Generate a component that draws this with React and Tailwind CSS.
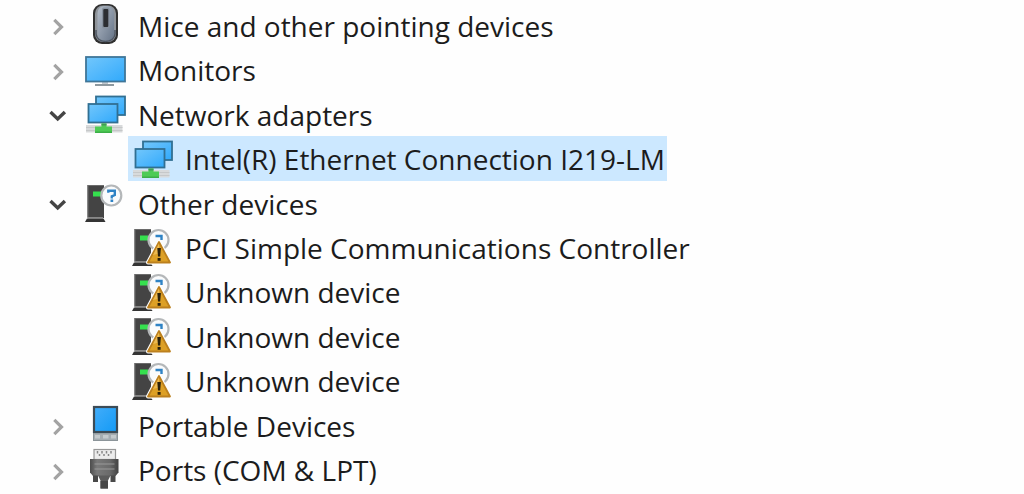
import React, { useState } from "react";

function MouseIcon() {
  return (
    <svg viewBox="0 0 44 44" className="size-11" aria-hidden="true">
      <defs>
        <linearGradient id="mouse-body" x1="0" y1="0" x2="1" y2="1">
          <stop offset="0" stopColor="#b4bdc9" />
          <stop offset="1" stopColor="#667487" />
        </linearGradient>
      </defs>
      <rect x="9" y="1" width="25" height="40" rx="9" fill="#303030" />
      <rect x="11" y="2.5" width="21" height="36.5" rx="8" fill="#8f949a" />
      <rect x="13.5" y="3" width="16.5" height="35" rx="7" fill="url(#mouse-body)" />
      <path d="M12 27v4q1 7 9.500 7.500q8.500-.5 9.500-7.500v-4" fill="none" stroke="#4d5663" strokeWidth="1.5" />
      <rect x="18" y="4.5" width="7.5" height="21" rx="2" fill="#87919e" />
      <rect x="19.300" y="6" width="5" height="18" rx="1" fill="#2c2e32" />
    </svg>
  );
}

function ScreenFill({ id }) {
  return (
    <linearGradient id={id} x1="0" y1="0" x2="1" y2="1">
      <stop offset="0" stopColor="#73c7fb" />
      <stop offset="0.5" stopColor="#52b8fc" />
      <stop offset="1" stopColor="#30a9fb" />
    </linearGradient>
  );
}

function MonitorIcon() {
  return (
    <svg viewBox="0 0 44 44" className="size-11" aria-hidden="true">
      <defs>
        <ScreenFill id="monitor-screen" />
      </defs>
      <rect x="18" y="34" width="6" height="3" fill="#c3c9ce" />
      <rect x="11" y="36" width="19" height="2" fill="#8e999f" />
      <rect x="2" y="9" width="39" height="24.5" fill="url(#monitor-screen)" stroke="#3f7698" strokeWidth="1.800" />
    </svg>
  );
}

function NetworkIcon({ id }) {
  return (
    <svg viewBox="0 0 44 44" className="size-11" aria-hidden="true">
      <defs>
        <ScreenFill id={id} />
      </defs>
      <rect x="2" y="33" width="36.5" height="7.5" fill="#d8dadb" />
      <path d="M2 35.500h36.500M2 38.500h36.500" stroke="#c6c8c9" strokeWidth="1" />
      <rect x="12" y="4.5" width="29" height="18.5" fill={`url(#${id})`} stroke="#316f92" strokeWidth="1.800" />
      <rect x="4.500" y="12" width="29" height="18.500" fill={`url(#${id})`} stroke="#316f92" strokeWidth="1.800" />
      <path d="M17.500 31.500h5v3h5.500v6.500h-17v-6.500h6.500z" fill="#4ecb55" />
      <path d="M17.500 31.500h5v2h-5z" fill="#429d56" />
      <path d="M11 39.500h17v1.500h-17z" fill="#3cae47" />
    </svg>
  );
}

function Tower() {
  return (
    <>
      <rect x="3.500" y="4" width="16.500" height="33" fill="#444" />
      <path d="M3.500 4h16.500v1h-15.500v31h-1z" fill="#6b6b6b" />
      <rect x="4" y="36" width="15" height="1.500" fill="#888" />
      <path d="M3 37.500h16.500l2 3.500h-20.500z" fill="#343434" />
      <rect x="9" y="10.500" width="8" height="5" fill="#35e04e" />
    </>
  );
}

function OtherIcon() {
  return (
    <svg viewBox="0 0 44 44" className="size-11" aria-hidden="true">
      <Tower />
      <circle cx="27.300" cy="14.500" r="10" fill="#fafbfc" stroke="#b4b7b9" strokeWidth="2.200" />
      <path d="M24.300 11.800v-2h6.500v4.200l-3 1.300v2.200" fill="none" stroke="#2f83c5" strokeWidth="2.400" />
      <rect x="26.500" y="18.500" width="2.700" height="2.500" fill="#2f83c5" />
    </svg>
  );
}

function WarningIcon() {
  return (
    <svg viewBox="0 0 44 44" className="size-11" aria-hidden="true">
      <Tower />
      <circle cx="27.500" cy="15" r="10" fill="#fafbfc" stroke="#b4b7b9" strokeWidth="2.200" />
      <path d="M24.500 11h6v4" fill="none" stroke="#2f83c5" strokeWidth="2.400" />
      <path d="M28 17L39 37.500H17z" fill="#fefefe" stroke="#fefefe" strokeWidth="4" strokeLinejoin="round" />
      <path d="M28 17L39 37.500H17z" fill="#dda026" stroke="#bc801e" strokeWidth="1.800" strokeLinejoin="round" />
      <path d="M28 18.500L22 30l6-1.500z" fill="#edba51" />
      <path d="M26.300 23h3.600l-.7 8.500h-2.200z" fill="#2b210c" />
      <rect x="26.600" y="33" width="3" height="2.800" fill="#2b210c" />
    </svg>
  );
}

function PortableIcon() {
  return (
    <svg viewBox="0 0 44 44" className="size-11" aria-hidden="true">
      <defs>
        <linearGradient id="portable-screen" x1="0" y1="0" x2="1" y2="1">
          <stop offset="0" stopColor="#43adfa" />
          <stop offset="1" stopColor="#129af6" />
        </linearGradient>
      </defs>
      <rect x="9" y="3" width="25" height="35" fill="#8b9499" />
      <rect x="10" y="4" width="23" height="25" fill="url(#portable-screen)" stroke="#3c4b56" strokeWidth="2.200" />
      <rect x="10" y="30.500" width="23" height="6.500" fill="#a5adb2" />
      <path d="M11 32h5v3.500h-5zM19 32h5.500v3.500h-5.500zM27 32h5v3.500h-5z" fill="#c4cacd" />
    </svg>
  );
}

function PortsIcon() {
  return (
    <svg viewBox="0 0 44 44" className="size-11" aria-hidden="true">
      <defs>
        <linearGradient id="port-shell" x1="0" y1="0" x2="1" y2="0">
          <stop offset="0" stopColor="#4c4c4c" />
          <stop offset="0.25" stopColor="#797979" />
          <stop offset="0.7" stopColor="#6a6a6a" />
          <stop offset="1" stopColor="#424242" />
        </linearGradient>
      </defs>
      <rect x="10" y="1.500" width="21.500" height="10" fill="#ececec" stroke="#989898" strokeWidth="1.200" />
      <path d="M13.500 3v2.500M18 3v2.500M22.500 3v2.500M27 3v2.500M15.500 6v2M20 6v2M24.500 6v2" stroke="#888" strokeWidth="1.500" />
      <path d="M6 11h28.500v13.500l-3 3.500h-22.500l-3-3.500z" fill="url(#port-shell)" />
      <path d="M10.500 16h20M10.500 21h20" stroke="#999" strokeWidth="1.200" />
      <path d="M9 27.500h5v6.500h-5zM26.500 27.500h5v6.500h-5z" fill="#494949" />
      <path d="M14 27.500h12.500l-2.500 5v8h-7.500v-8z" fill="#5c5c5c" />
      <path d="M16.500 33h7.500v7.500h-7.500z" fill="#474747" />
    </svg>
  );
}

function Chevron({ open }) {
  return (
    <svg viewBox="0 0 20 20" className="mt-1 size-5" aria-hidden="true">
      {open ? (
        <path d="M2.500 6l7.200 7 7.200-7" fill="none" stroke="#444" strokeWidth="3.400" />
      ) : (
        <path d="M6.300 2.800l7.200 7.200-7.200 7.200" fill="none" stroke="#a3a3a3" strokeWidth="3.200" />
      )}
    </svg>
  );
}

const categories = [
  { name: "Mice and other pointing devices", icon: <MouseIcon /> },
  { name: "Monitors", icon: <MonitorIcon /> },
  {
    name: "Network adapters",
    icon: <NetworkIcon id="network-group" />,
    open: true,
    devices: [{ name: "Intel(R) Ethernet Connection I219-LM", icon: <NetworkIcon id="network-device" /> }],
  },
  {
    name: "Other devices",
    icon: <OtherIcon />,
    open: true,
    devices: [
      { name: "PCI Simple Communications Controller", icon: <WarningIcon /> },
      { name: "Unknown device", icon: <WarningIcon /> },
      { name: "Unknown device", icon: <WarningIcon /> },
      { name: "Unknown device", icon: <WarningIcon /> },
    ],
  },
  { name: "Portable Devices", icon: <PortableIcon /> },
  { name: "Ports (COM & LPT)", icon: <PortsIcon /> },
];

export default function App() {
  const [open, setOpen] = useState(categories.map((c) => Boolean(c.open)));
  const [selected, setSelected] = useState("2-0");
  const toggle = (i) => setOpen(open.map((value, k) => (k === i ? !value : value)));

  return (
    <main className="min-h-screen bg-[#fefefe] font-['Open_Sans','Noto_Sans',sans-serif] text-[28px] leading-9 text-[#1c1c1c]">
      <ul className="grid min-h-screen auto-rows-fr pt-[3px] pb-0.5">
        {categories.map((category, i) => (
          <React.Fragment key={category.name}>
            <li className="flex pl-12">
              <button
                type="button"
                aria-expanded={open[i]}
                onClick={() => toggle(i)}
                className="flex items-center whitespace-nowrap text-left"
              >
                <Chevron open={open[i]} />
                <span className="ml-4">{category.icon}</span>
                <span className="ml-2.5 pt-px">{category.name}</span>
              </button>
            </li>
            {open[i] &&
              (category.devices || []).map((device, j) => (
                <li key={j} className="flex pl-32">
                  <button
                    type="button"
                    aria-pressed={selected === `${i}-${j}`}
                    onClick={() => setSelected(`${i}-${j}`)}
                    className={`flex items-center whitespace-nowrap pr-0.5 pl-[3px] text-left ${
                      selected === `${i}-${j}` ? "bg-[#cce8ff]" : ""
                    }`}
                  >
                    {device.icon}
                    <span className="ml-2.5 pt-px">{device.name}</span>
                  </button>
                </li>
              ))}
          </React.Fragment>
        ))}
      </ul>
    </main>
  );
}
